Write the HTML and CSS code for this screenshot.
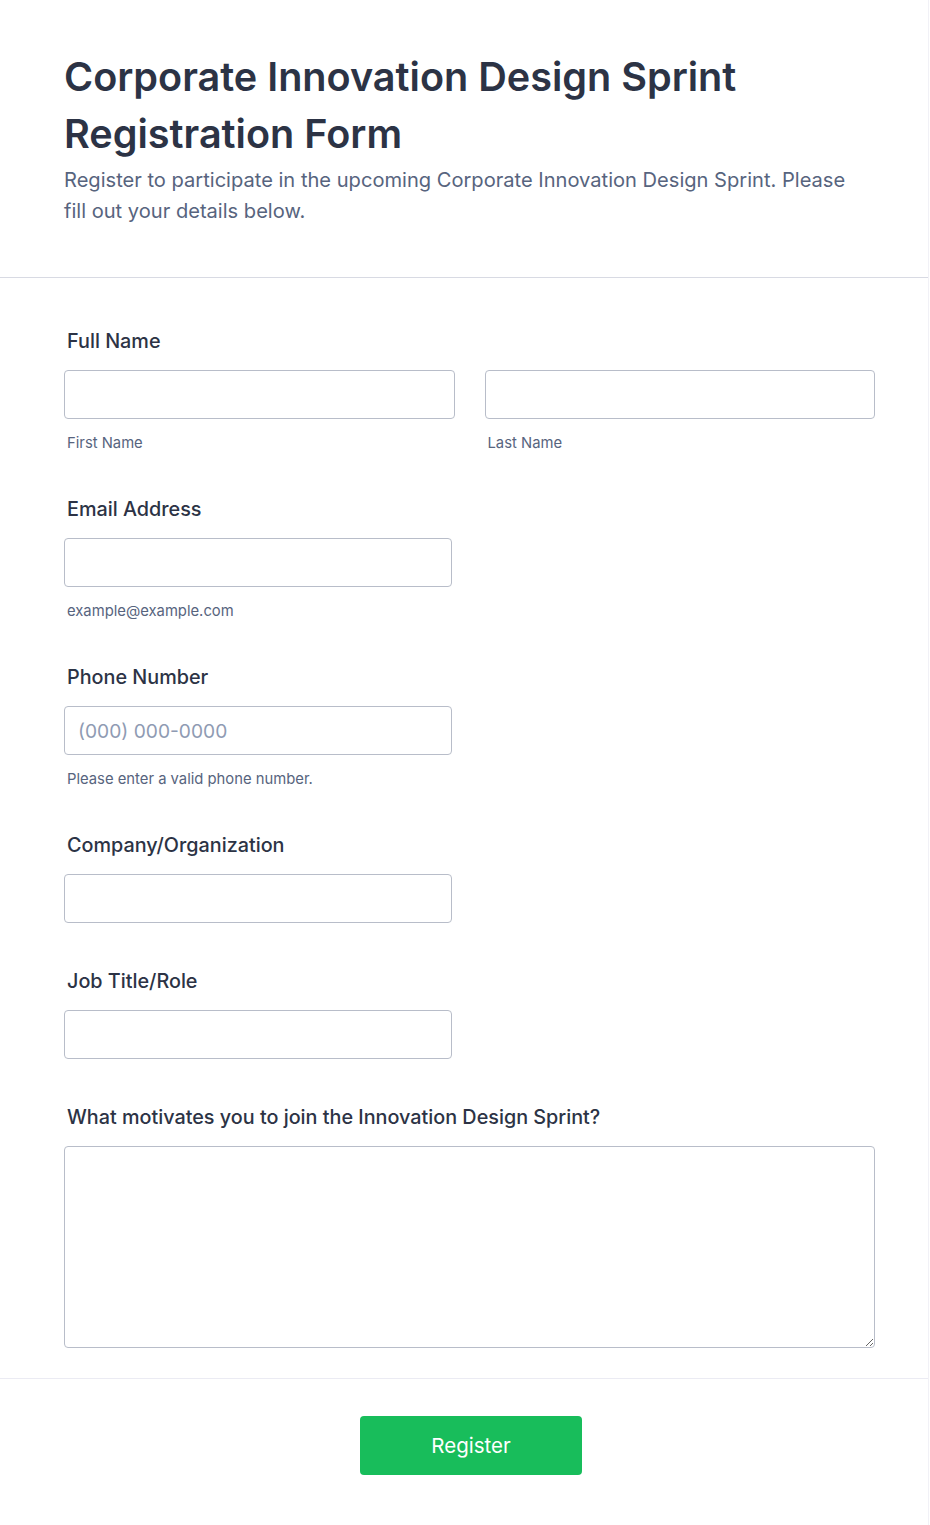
FILE: index.html
```html
<!DOCTYPE html>
<html lang="en">
<head>
<meta charset="utf-8">
<title>Corporate Innovation Design Sprint Registration Form</title>
<link rel="stylesheet" href="styles.css">
</head>
<body>
<div class="form-wrap">
  <header class="form-header">
    <h1 class="form-title">Corporate Innovation Design Sprint Registration Form</h1>
    <p class="form-desc">Register to participate in the upcoming Corporate Innovation Design Sprint. Please fill out your details below.</p>
  </header>

  <form class="form-body">
    <div class="field">
      <label class="field-label">Full Name</label>
      <div class="name-row">
        <div class="name-col">
          <input class="text-input" type="text">
          <span class="sublabel">First Name</span>
        </div>
        <div class="name-col">
          <input class="text-input" type="text">
          <span class="sublabel">Last Name</span>
        </div>
      </div>
    </div>

    <div class="field">
      <label class="field-label">Email Address</label>
      <input class="text-input short" type="email">
      <span class="sublabel">example@example.com</span>
    </div>

    <div class="field">
      <label class="field-label">Phone Number</label>
      <input class="text-input short" type="tel" placeholder="(000) 000-0000">
      <span class="sublabel">Please enter a valid phone number.</span>
    </div>

    <div class="field">
      <label class="field-label">Company/Organization</label>
      <input class="text-input short" type="text">
    </div>

    <div class="field">
      <label class="field-label">Job Title/Role</label>
      <input class="text-input short" type="text">
    </div>

    <div class="field last">
      <label class="field-label">What motivates you to join the Innovation Design Sprint?</label>
      <textarea class="text-area"></textarea>
    </div>
  </form>

  <footer class="form-footer">
    <button class="submit-btn" type="button">Register</button>
  </footer>
</div>
</body>
</html>
```

FILE: styles.css
```css
* {
  box-sizing: border-box;
}

body {
  margin: 0;
  background: #ffffff;
  font-family: Inter, "Noto Sans", sans-serif;
  color: #2c3345;
}

.form-wrap {
  width: 929px;
  border-right: 1px solid #f1f1f6;
  min-height: 1525px;
}

.form-header {
  padding: 49px 55px 50px 64px;
  border-bottom: 1px solid #d8dae3;
}

.form-title {
  margin: 0;
  font-size: 39.6px;
  line-height: 57px;
  font-weight: 600;
  color: #2c3345;
}

.form-desc {
  margin: 2px 0 0;
  max-width: 790px;
  font-size: 20.1px;
  line-height: 31px;
  color: #57647e;
}

.form-body {
  padding: 52px 54px 30px 64px;
  display: flex;
  flex-direction: column;
  gap: 47px;
}

.field {
  display: flex;
  flex-direction: column;
  align-items: flex-start;
}

.field-label {
  display: block;
  padding-left: 3px;
  font-size: 19.8px;
  line-height: 22px;
  font-weight: 500;
  color: #2c3345;
  margin-bottom: 18px;
}

.name-row {
  display: flex;
  gap: 30px;
  width: 811px;
}

.name-col {
  flex: 1;
  display: flex;
  flex-direction: column;
}

.text-input {
  width: 100%;
  height: 49px;
  border: 1px solid #b8bdc9;
  border-radius: 4px;
  padding: 0 13px;
  font-family: Inter, "Noto Sans", sans-serif;
  font-size: 19.2px;
  color: #2c3345;
  background: #ffffff;
}

.text-input.short {
  width: 388px;
}

.text-input::placeholder {
  color: #8f9bb3;
}

.sublabel {
  display: block;
  margin-top: 16px;
  padding-left: 3px;
  font-size: 14.8px;
  line-height: 16px;
  color: #57647e;
}

.text-area {
  width: 811px;
  height: 202px;
  border: 1px solid #b8bdc9;
  border-radius: 4px;
  padding: 10px 14px;
  font-family: Inter, "Noto Sans", sans-serif;
  font-size: 18px;
  background: #ffffff;
  display: block;
}

.form-footer {
  border-top: 1px solid #ebebf3;
  padding: 37px 51px 50px 65px;
  display: flex;
  justify-content: center;
}

.submit-btn {
  width: 222px;
  height: 59px;
  border: none;
  border-radius: 4px;
  background: #18bd5b;
  color: #ffffff;
  font-family: Inter, "Noto Sans", sans-serif;
  font-size: 20.5px;
  font-weight: 400;
  cursor: pointer;
}
```
